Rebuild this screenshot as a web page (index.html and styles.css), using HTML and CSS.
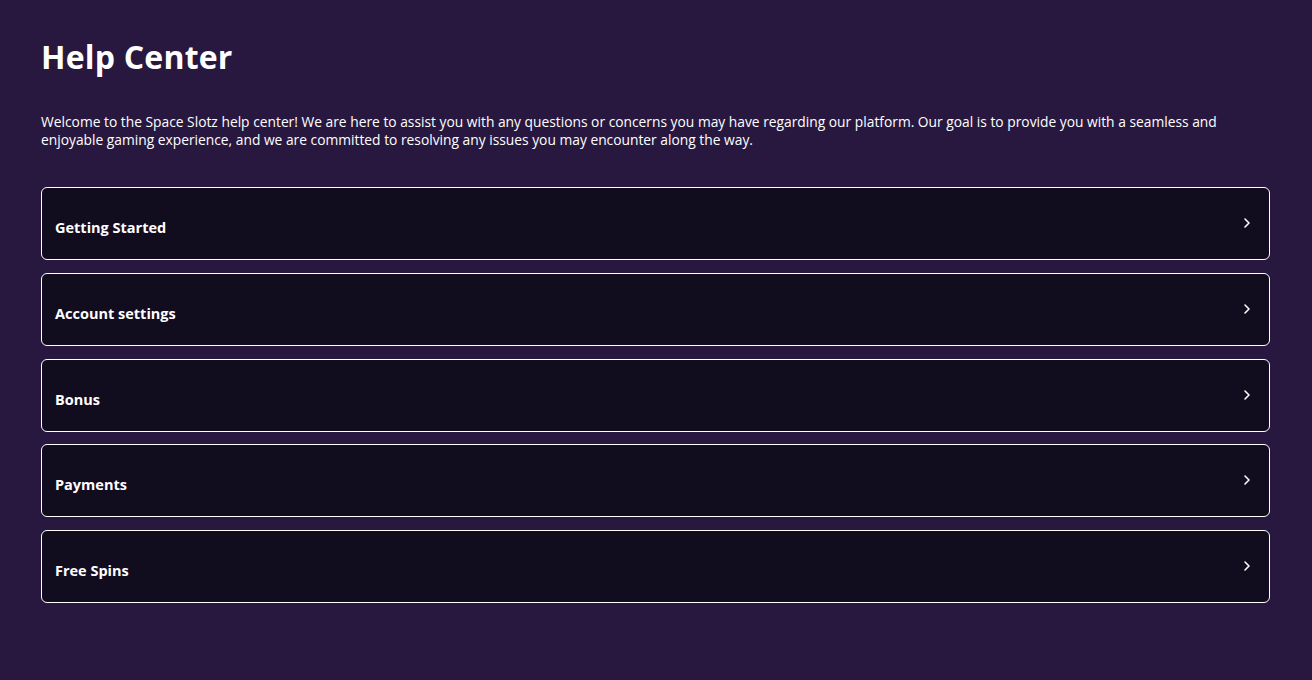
FILE: index.html
```html
<!DOCTYPE html>
<html lang="en">
<head>
<meta charset="utf-8">
<title>Help Center</title>
<link rel="stylesheet" href="styles.css">
</head>
<body>
<main class="page">
  <h1 class="title">Help Center</h1>
  <p class="intro">Welcome to the Space Slotz help center! We are here to assist you with any questions or concerns you may have regarding our platform. Our goal is to provide you with a seamless and enjoyable gaming experience, and we are committed to resolving any issues you may encounter along the way.</p>
  <div class="list">
    <a class="item" href="#"><span class="item-title">Getting Started</span><svg class="chev" viewBox="0 0 8 12" width="8" height="12"><path d="M2 2l4 4-4 4" fill="none" stroke="#fff" stroke-width="1.6" stroke-linecap="round" stroke-linejoin="round"/></svg></a>
    <a class="item" href="#"><span class="item-title">Account settings</span><svg class="chev" viewBox="0 0 8 12" width="8" height="12"><path d="M2 2l4 4-4 4" fill="none" stroke="#fff" stroke-width="1.6" stroke-linecap="round" stroke-linejoin="round"/></svg></a>
    <a class="item" href="#"><span class="item-title">Bonus</span><svg class="chev" viewBox="0 0 8 12" width="8" height="12"><path d="M2 2l4 4-4 4" fill="none" stroke="#fff" stroke-width="1.6" stroke-linecap="round" stroke-linejoin="round"/></svg></a>
    <a class="item" href="#"><span class="item-title">Payments</span><svg class="chev" viewBox="0 0 8 12" width="8" height="12"><path d="M2 2l4 4-4 4" fill="none" stroke="#fff" stroke-width="1.6" stroke-linecap="round" stroke-linejoin="round"/></svg></a>
    <a class="item" href="#"><span class="item-title">Free Spins</span><svg class="chev" viewBox="0 0 8 12" width="8" height="12"><path d="M2 2l4 4-4 4" fill="none" stroke="#fff" stroke-width="1.6" stroke-linecap="round" stroke-linejoin="round"/></svg></a>
  </div>
</main>
</body>
</html>
```
FILE: styles.css
```css
html, body {
  margin: 0;
  padding: 0;
  background: #28183f;
  color: #ffffff;
  font-family: "Open Sans", "Liberation Sans", sans-serif;
}
.page {
  padding: 36px 42px 40px 41px;
}
.title {
  margin: 0;
  font-size: 32px;
  font-weight: 700;
  line-height: 42px;
  letter-spacing: 0.2px;
}
.intro {
  margin: 35px 0 0;
  font-size: 13.8px;
  line-height: 18px;
  font-weight: 400;
}
.list {
  display: flex;
  flex-direction: column;
  gap: 12.75px;
  margin-top: 38px;
}
.item {
  display: flex;
  justify-content: space-between;
  align-items: flex-start;
  height: 71px;
  border: 1px solid #ffffff;
  border-radius: 6px;
  background: #120c1f;
  color: #ffffff;
  text-decoration: none;
  box-sizing: content-box;
  padding: 0 18px 0 13px;
}
.item-title {
  margin-top: 31px;
  font-size: 14.5px;
  font-weight: 700;
  line-height: 18px;
}
.chev {
  margin-top: 29px;
}
```
